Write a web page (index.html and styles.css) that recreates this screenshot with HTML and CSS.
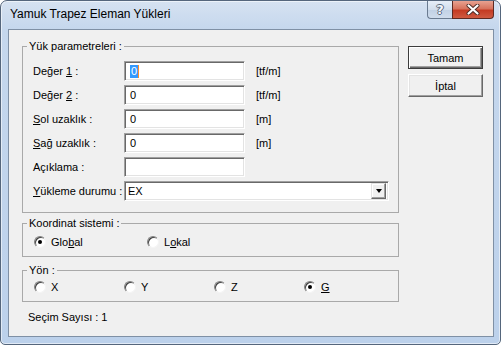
FILE: index.html
```html
<!DOCTYPE html>
<html lang="tr">
<head>
  <meta charset="UTF-8" />
  <title>Yamuk Trapez Eleman Yükleri</title>
  <link rel="stylesheet" href="styles.css">
</head>
<body>
  <div class="window">
    <div class="titlebar">
      <span class="title">Yamuk Trapez Eleman Yükleri</span>
      <div class="caption-buttons">
        <span class="cap-btn help">?</span>
        <span class="cap-btn close">
          <svg width="14" height="11" viewBox="0 0 14 11">
            <path d="M2.5 1.5 L11.5 9.5 M11.5 1.5 L2.5 9.5" stroke="#4a2a24" stroke-width="4" stroke-linecap="round" fill="none"/>
            <path d="M2.5 1.5 L11.5 9.5 M11.5 1.5 L2.5 9.5" stroke="#ffffff" stroke-width="2.2" stroke-linecap="round" fill="none"/>
          </svg>
        </span>
      </div>
    </div>

    <div class="client">
      <div class="main">
        <fieldset class="group params">
          <legend>Yük parametreleri :</legend>
          <div class="row">
            <label>Değer <u>1</u> :</label>
            <div class="field"><span class="sel">0</span></div>
            <span class="unit">[tf/m]</span>
          </div>
          <div class="row">
            <label>Değer <u>2</u> :</label>
            <div class="field">0</div>
            <span class="unit">[tf/m]</span>
          </div>
          <div class="row">
            <label><u>S</u>ol uzaklık :</label>
            <div class="field">0</div>
            <span class="unit">[m]</span>
          </div>
          <div class="row">
            <label><u>S</u>ağ uzaklık :</label>
            <div class="field">0</div>
            <span class="unit">[m]</span>
          </div>
          <div class="row">
            <label>Açıklama :</label>
            <div class="field"></div>
          </div>
          <div class="row">
            <label><u>Y</u>ükleme durumu :</label>
            <div class="combo">
              <span class="combo-text">EX</span>
              <span class="drop"><span class="arrow"></span></span>
            </div>
          </div>
        </fieldset>

        <fieldset class="group coord">
          <legend>Koordinat sistemi :</legend>
          <div class="radios">
            <span class="radio wide checked"><span class="dot"></span><span>Glo<u>b</u>al</span></span>
            <span class="radio"><span class="dot"></span><span>L<u>o</u>kal</span></span>
          </div>
        </fieldset>

        <fieldset class="group dir">
          <legend>Yön :</legend>
          <div class="radios">
            <span class="radio"><span class="dot"></span><span>X</span></span>
            <span class="radio"><span class="dot"></span><span>Y</span></span>
            <span class="radio"><span class="dot"></span><span>Z</span></span>
            <span class="radio checked"><span class="dot"></span><span><u>G</u></span></span>
          </div>
        </fieldset>

        <div class="count">Seçim Sayısı : 1</div>
      </div>

      <div class="side">
        <button class="btn default">Tamam</button>
        <button class="btn">İptal</button>
      </div>
    </div>
  </div>
</body>
</html>
```

FILE: styles.css
```css
body {
  margin: 0;
  font-family: "Liberation Sans", Arial, sans-serif;
  font-size: 11px;
  color: #000;
  background: #fff;
}
.window {
  width: 501px;
  height: 345px;
  box-sizing: border-box;
  border: 1px solid #55667c;
  border-radius: 7px 7px 5px 5px;
  background: linear-gradient(180deg, #d6e2f1 0, #c5d7ed 28px, #bcd1eb 100%);
  box-shadow: inset 0 0 0 1px rgba(255, 255, 255, 0.55);
}
.titlebar {
  height: 28px;
  display: flex;
  justify-content: space-between;
  padding: 0 6px 0 9px;
}
.title {
  font-size: 12px;
  line-height: 15px;
  padding-top: 6px;
  color: #000;
}
.caption-buttons {
  display: flex;
  height: 18px;
}
.cap-btn {
  display: flex;
  align-items: center;
  justify-content: center;
  height: 18px;
  box-sizing: border-box;
  border: 1px solid #6a7b90;
  border-top: none;
}
.help {
  width: 25px;
  border-radius: 0 0 0 4px;
  border-right: none;
  background: linear-gradient(180deg, #e6eef8 0, #d2deec 50%, #c1d1e5 51%, #cfdcec 100%);
  color: #f4f7fb;
  font-family: "DejaVu Sans", sans-serif;
  font-weight: bold;
  font-size: 13px;
  text-shadow: 1px 0 0 #5a6a7e, -1px 0 0 #5a6a7e, 0 1px 0 #5a6a7e, 0 -1px 0 #5a6a7e;
}
.close {
  width: 42px;
  border-radius: 0 0 4px 0;
  border-color: #5e2a22;
  background: linear-gradient(180deg, #e8a291 0, #d7735d 45%, #c43b23 55%, #cf5a41 100%);
}
.client {
  display: flex;
  width: 486px;
  height: 308px;
  box-sizing: border-box;
  margin-left: 7px;
  border: 1px solid #7f90a5;
  background: #f0f0f0;
}
.main {
  width: 390px;
  padding: 10px 0 0 13px;
  box-sizing: border-box;
}
.group {
  width: 377px;
  box-sizing: border-box;
  margin: 0;
  padding: 0 4px;
  border: 1px solid #a9a9a9;
  min-width: 0;
}
.group legend {
  padding: 0 2px;
  line-height: 13px;
}
.params {
  padding-top: 8px;
  padding-bottom: 11px;
}
.row {
  display: flex;
  align-items: center;
  height: 20px;
  margin-bottom: 4px;
  padding-left: 6px;
}
.row:last-child {
  margin-bottom: 0;
}
.row label {
  width: 91px;
}
.field, .combo {
  height: 20px;
  box-sizing: border-box;
  background: #fff;
  border: 1px solid;
  border-color: #a0a0a0 #ffffff #ffffff #a0a0a0;
  box-shadow: inset 1px 1px 0 #696969, inset -1px -1px 0 #e3e3e3;
  display: flex;
  align-items: center;
}
.field {
  width: 121px;
  padding-left: 5px;
}
.sel {
  background: #3399ff;
  color: #fff;
  padding: 0 1px;
  line-height: 13px;
  border-right: 1px solid #ff8c2a;
}
.unit {
  margin-left: 11px;
}
.combo {
  width: 265px;
  padding: 0 2px 0 3px;
  justify-content: space-between;
}
.drop {
  width: 15px;
  height: 16px;
  box-sizing: border-box;
  background: #f0f0f0;
  border: 1px solid;
  border-color: #e3e3e3 #696969 #696969 #e3e3e3;
  box-shadow: inset -1px -1px 0 #a0a0a0, inset 1px 1px 0 #fff;
  display: flex;
  align-items: center;
  justify-content: center;
}
.arrow {
  width: 0;
  height: 0;
  border-left: 3.5px solid transparent;
  border-right: 3.5px solid transparent;
  border-top: 4px solid #000;
}
.coord {
  margin-top: 4px;
  padding-top: 5px;
  padding-bottom: 8px;
}
.dir {
  margin-top: 7px;
  padding-top: 3px;
  padding-bottom: 8px;
}
.radios {
  display: flex;
  padding-left: 7px;
  height: 13px;
  align-items: center;
}
.radio {
  display: flex;
  align-items: center;
  gap: 5px;
  width: 90px;
}
.radio.wide {
  width: 113px;
}
.dot {
  width: 12px;
  height: 12px;
  box-sizing: border-box;
  border-radius: 50%;
  background: #fff;
  border: 1px solid;
  border-color: #808080 #f4f4f4 #f4f4f4 #808080;
  box-shadow: inset 1px 1px 0 #404040;
  display: flex;
  align-items: center;
  justify-content: center;
}
.checked .dot::after {
  content: "";
  width: 4px;
  height: 4px;
  border-radius: 50%;
  background: #000;
}
.count {
  margin-top: 9px;
  padding-left: 6px;
  line-height: 13px;
}
.side {
  display: flex;
  flex-direction: column;
  gap: 5px;
  padding: 16px 0 0 9px;
}
.btn {
  width: 75px;
  height: 23px;
  box-sizing: border-box;
  font-family: "Liberation Sans", Arial, sans-serif;
  font-size: 11px;
  color: #000;
  background: #f0f0f0;
  border: 1px solid;
  border-color: #ffffff #696969 #696969 #ffffff;
  box-shadow: inset -1px -1px 0 #a0a0a0, inset 1px 1px 0 #e3e3e3;
  padding: 0;
}
.btn.default {
  border: 1px solid #3c3c3c;
  box-shadow: inset 1px 1px 0 #fff, inset -1px -1px 0 #696969, inset -2px -2px 0 #a0a0a0;
}
```
